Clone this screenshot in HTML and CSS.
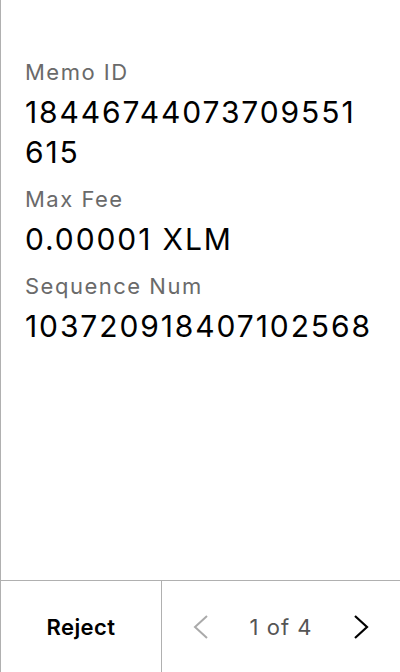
FILE: index.html
```html
<!DOCTYPE html>
<html>
<head>
<meta charset="utf-8">
<link rel="stylesheet" href="styles.css">
</head>
<body>
<div class="screen">
  <div class="content">
    <div class="field">
      <div class="label">Memo ID</div>
      <div class="value">18446744073709551<br>615</div>
    </div>
    <div class="field">
      <div class="label">Max Fee</div>
      <div class="value">0.00001 XLM</div>
    </div>
    <div class="field">
      <div class="label">Sequence Num</div>
      <div class="value">103720918407102568</div>
    </div>
  </div>
  <div class="footer">
    <div class="reject">Reject</div>
    <div class="pager">
      <svg class="chev chev-prev" width="16" height="24" viewBox="0 0 16 24"><path d="M14 1 L2 12 L14 23" fill="none" stroke="currentColor" stroke-width="2"/></svg>
      <span class="count">1 of 4</span>
      <svg class="chev chev-next" width="16" height="24" viewBox="0 0 16 24"><path d="M2 1 L14 12 L2 23" fill="none" stroke="currentColor" stroke-width="2.2"/></svg>
    </div>
  </div>
</div>
</body>
</html>
```
FILE: styles.css
```css
html, body {
  margin: 0;
  padding: 0;
  background: #fff;
}
.screen {
  width: 400px;
  height: 672px;
  box-sizing: border-box;
  border-left: 1px solid #b0b0b0;
  display: flex;
  flex-direction: column;
  font-family: Inter, "Noto Sans", sans-serif;
  color: #000;
}
.content {
  flex: 1;
  padding: 57px 10px 0 24px;
}
.field {
  margin-bottom: 12px;
}
.label {
  font-size: 22px;
  line-height: 30px;
  letter-spacing: 1.5px;
  color: #6a6a6a;
  margin-bottom: 5px;
}
.value {
  font-size: 30px;
  line-height: 40px;
  letter-spacing: 1.9px;
  color: #000;
}
.footer {
  height: 92px;
  border-top: 1px solid #b0b0b0;
  display: flex;
  box-sizing: border-box;
}
.reject {
  width: 160px;
  border-right: 1px solid #b0b0b0;
  display: flex;
  align-items: center;
  justify-content: center;
  font-size: 22px;
  font-weight: 600;
  letter-spacing: 0.4px;
}
.pager {
  flex: 1;
  display: flex;
  align-items: center;
  justify-content: space-between;
  padding: 0 31px 0 31px;
}
.count {
  font-size: 22px;
  letter-spacing: 1px;
  color: #555;
}
.chev-prev { color: #aaa; }
.chev-next { color: #000; }
```
